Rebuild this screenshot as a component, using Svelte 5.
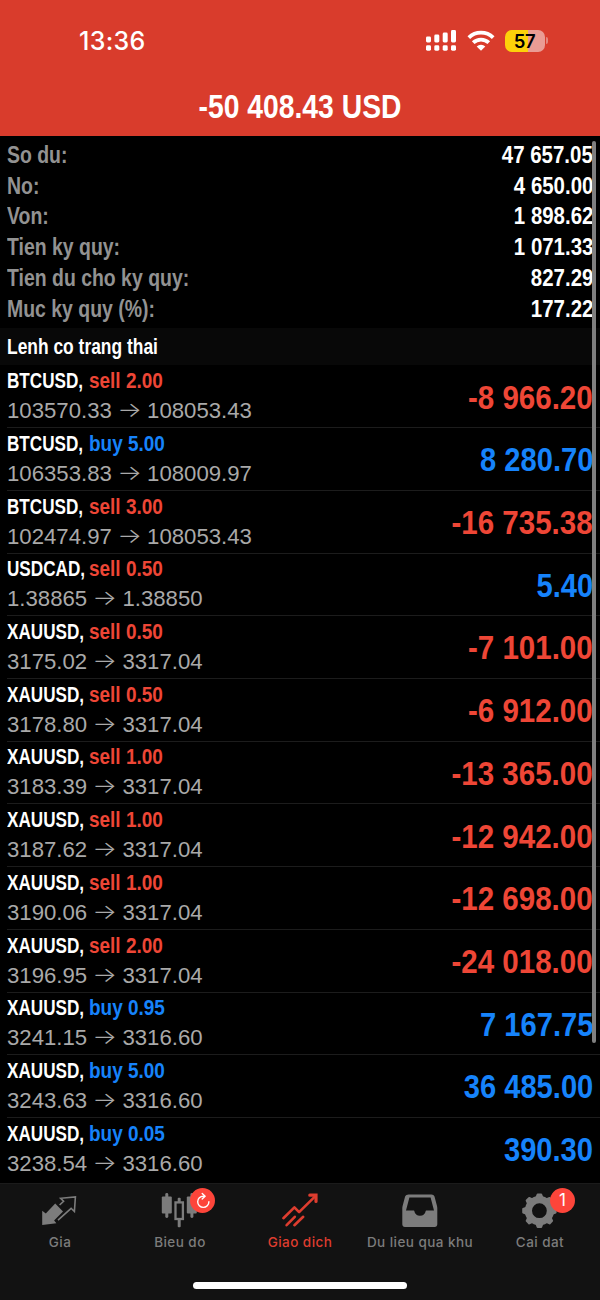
<script lang="ts">
  type Side = 'sell' | 'buy';

  const summary = [
    { label: 'So du:', value: '47 657.05' },
    { label: 'No:', value: '4 650.00' },
    { label: 'Von:', value: '1 898.62' },
    { label: 'Tien ky quy:', value: '1 071.33' },
    { label: 'Tien du cho ky quy:', value: '827.29' },
    { label: 'Muc ky quy (%):', value: '177.22' },
  ];

  const positions: { symbol: string; side: Side; lots: string; open: string; now: string; profit: string }[] = [
    { symbol: 'BTCUSD', side: 'sell', lots: '2.00', open: '103570.33', now: '108053.43', profit: '-8 966.20' },
    { symbol: 'BTCUSD', side: 'buy', lots: '5.00', open: '106353.83', now: '108009.97', profit: '8 280.70' },
    { symbol: 'BTCUSD', side: 'sell', lots: '3.00', open: '102474.97', now: '108053.43', profit: '-16 735.38' },
    { symbol: 'USDCAD', side: 'sell', lots: '0.50', open: '1.38865', now: '1.38850', profit: '5.40' },
    { symbol: 'XAUUSD', side: 'sell', lots: '0.50', open: '3175.02', now: '3317.04', profit: '-7 101.00' },
    { symbol: 'XAUUSD', side: 'sell', lots: '0.50', open: '3178.80', now: '3317.04', profit: '-6 912.00' },
    { symbol: 'XAUUSD', side: 'sell', lots: '1.00', open: '3183.39', now: '3317.04', profit: '-13 365.00' },
    { symbol: 'XAUUSD', side: 'sell', lots: '1.00', open: '3187.62', now: '3317.04', profit: '-12 942.00' },
    { symbol: 'XAUUSD', side: 'sell', lots: '1.00', open: '3190.06', now: '3317.04', profit: '-12 698.00' },
    { symbol: 'XAUUSD', side: 'sell', lots: '2.00', open: '3196.95', now: '3317.04', profit: '-24 018.00' },
    { symbol: 'XAUUSD', side: 'buy', lots: '0.95', open: '3241.15', now: '3316.60', profit: '7 167.75' },
    { symbol: 'XAUUSD', side: 'buy', lots: '5.00', open: '3243.63', now: '3316.60', profit: '36 485.00' },
    { symbol: 'XAUUSD', side: 'buy', lots: '0.05', open: '3238.54', now: '3316.60', profit: '390.30' },
  ];

  const tabs = [
    { id: 'quotes', label: 'Gia' },
    { id: 'chart', label: 'Bieu do' },
    { id: 'trade', label: 'Giao dich' },
    { id: 'history', label: 'Du lieu qua khu' },
    { id: 'settings', label: 'Cai dat' },
  ];

  const active = 'trade';
  const teeth = [0, 45, 90, 135, 180, 225, 270, 315];
</script>

<div class="screen">
  <header>
    <div class="status">
      <span class="time">13:36</span>
      <div class="indicators">
        <svg width="32" height="22" viewBox="0 0 32 22" fill="#fff">
          <rect x="0" y="6.5" width="5" height="6" rx="1.4" />
          <rect x="8.3" y="4.5" width="5" height="8" rx="1.4" />
          <rect x="16.7" y="2.5" width="5" height="10" rx="1.4" />
          <rect x="25" y="0" width="5" height="12.5" rx="1.4" />
          <rect x="0" y="15.3" width="5" height="5.4" rx="1.4" />
          <rect x="8.3" y="15.3" width="5" height="5.4" rx="1.4" />
          <rect x="16.7" y="15.3" width="5" height="5.4" rx="1.4" />
          <rect x="25" y="15.3" width="5" height="5.4" rx="1.4" />
        </svg>
        <svg class="wifi" width="28" height="22" viewBox="0 0 28 22" fill="none" stroke="#fff" stroke-width="3.8">
          <path d="M1.8 7.6a17.6 17.6 0 0 1 24.4 0" />
          <path d="M6.2 12.7a11.3 11.3 0 0 1 15.6 0" />
          <path d="M14 20.8l-4.3-4.3a6 6 0 0 1 8.6 0z" fill="#fff" stroke="none" />
        </svg>
        <div class="battery"><span>57</span></div>
        <i class="nub"></i>
      </div>
    </div>
    <h1 class="cond">-50 408.43 USD</h1>
  </header>

  <main>
    <section class="summary">
      {#each summary as row}
        <div class="sum-row">
          <span class="sum-label cond">{row.label}</span>
          <span class="sum-value cond">{row.value}</span>
        </div>
      {/each}
    </section>

    <h2><span class="cond">Lenh co trang thai</span></h2>

    <section class="positions">
      {#each positions as p}
        <div class="pos">
          <div class="pos-info">
            <div class="pos-title">
              <span class="symbol cond">{p.symbol},</span>
              <span class="order cond {p.side}">{p.side} {p.lots}</span>
            </div>
            <div class="prices">{p.open}<span class="arrow">→</span>{p.now}</div>
          </div>
          <div class="profit cond" class:loss={p.profit.startsWith('-')}>{p.profit}</div>
        </div>
      {/each}
    </section>
    <div class="scrollbar"></div>
  </main>

  <nav>
    {#each tabs as tab}
      <div class="tab" class:active={tab.id === active}>
        <div class="icon">
          {#if tab.id === 'quotes'}
            <svg width="40" height="40" viewBox="0 0 40 40">
              <path d="M15.2 11.6l7.8 7.8-8.9 9.2 2.3 2.6L2.2 33V18.8l3.6 2.6z" fill="currentColor" />
              <path d="M19.6 13l4-3.7-3-3 14.8-1.4-1 14.6-3.3-3.2L18 28.2" fill="none" stroke="currentColor" stroke-width="1.6" />
            </svg>
          {:else if tab.id === 'chart'}
            <svg width="40" height="40" viewBox="0 0 40 40" fill="currentColor">
              <rect x="1.8" y="4.5" width="10" height="17" rx="1" />
              <rect x="5.3" y="1" width="3" height="25" rx="1.4" />
              <rect x="15.5" y="10.4" width="7.4" height="16.6" fill="none" stroke="currentColor" stroke-width="2.3" />
              <rect x="17.7" y="5.8" width="3" height="5" rx="1" />
              <rect x="17.7" y="27" width="3" height="8.2" rx="1" />
              <rect x="26.8" y="4.5" width="10" height="17" rx="1" />
              <rect x="30.4" y="1" width="3" height="25" rx="1.4" />
            </svg>
            <span class="badge">
              <svg width="18" height="18" viewBox="0 0 18 18" fill="none" stroke="#fff" stroke-width="1.4" stroke-linecap="round" stroke-linejoin="round">
                <path d="M10.6 4.2H9.3a5.6 5.6 0 1 0 5.6 5.6" />
                <path d="M8.2 1.4l2.9 2.8-2.9 2.8" />
              </svg>
            </span>
          {:else if tab.id === 'trade'}
            <svg width="40" height="40" viewBox="0 0 40 40" fill="none" stroke="currentColor" stroke-width="2.6" stroke-linecap="round" stroke-linejoin="round">
              <path d="M3.4 26.2L14.4 15.4l4.7 4.7L35.6 3.8" />
              <path d="M29.8 3.2h6.2v6.2" stroke-width="3.2" stroke-linejoin="miter" />
              <path d="M6.6 33.2l8.2-8.4M14.4 33.2l8.8-8.4" />
            </svg>
          {:else if tab.id === 'history'}
            <svg width="40" height="40" viewBox="0 0 40 40">
              <path fill="currentColor" fill-rule="evenodd" d="M8.6 2.4h22.8c1.6 0 2.6.8 3.1 2.2l2.5 9.3c.2.8.3 1.6.3 2.4v15.9c0 1.6-1 2.7-2.6 2.7H4.9c-1.6 0-2.6-1.1-2.6-2.7V16.3c0-.8.1-1.6.3-2.4l2.5-9.3C5.6 3.2 7 2.4 8.6 2.4zM9.4 5.4L6 18.4h7.8c.3 0 .5.2.5.6a5.8 5.8 0 0 0 11.4 0c0-.4.2-.6.5-.6H34L30.6 5.4z" />
            </svg>
          {:else}
            <svg width="40" height="40" viewBox="0 0 40 40" fill="none" stroke="currentColor">
              <circle cx="19.4" cy="18.7" r="11" stroke-width="7.2" />
              {#each teeth as a}
                <path d="M17.6 2.5h3.6l1.3 3.4h-6.2z" stroke-width="2" stroke-linejoin="round" fill="currentColor" transform="rotate({a} 19.4 18.7)" />
              {/each}
            </svg>
            <span class="badge">1</span>
          {/if}
        </div>
        <span class="tab-label">{tab.label}</span>
      </div>
    {/each}
    <div class="home"></div>
  </nav>
</div>

<style>
  :global(body) {
    background: #000;
  }
  .screen {
    width: 600px;
    height: 1300px;
    display: flex;
    flex-direction: column;
    overflow: hidden;
    background: #000;
    color: #fff;
    font-family: "Liberation Sans", Arial, sans-serif;
  }
  /* squeezed bold face, ratio is set per element */
  .cond {
    display: inline-block;
    font-weight: 700;
    white-space: nowrap;
    transform: scaleX(var(--squeeze, .81));
    transform-origin: left center;
  }

  header {
    height: 136px;
    flex-shrink: 0;
    background: #d93c2c;
  }
  .status {
    height: 81px;
    padding: 0 52px 0 79px;
    display: flex;
    align-items: center;
    justify-content: space-between;
  }
  .time {
    font-family: Inter, sans-serif;
    font-size: 25px;
    font-weight: 500;
    letter-spacing: .3px;
    padding-top: 1px;
  }
  .indicators {
    display: flex;
    align-items: center;
  }
  .wifi { margin-left: 9px; }
  .battery {
    width: 40px;
    height: 22px;
    margin-left: 10px;
    border-radius: 7px;
    background: linear-gradient(90deg, #fdd20a 57%, #ea9c94 57%);
    color: #000;
    font: 600 18.5px/22px Inter, sans-serif;
    letter-spacing: -.4px;
    text-align: center;
  }
  .nub {
    width: 2.5px;
    height: 7px;
    margin-left: 1px;
    border-radius: 0 3px 3px 0;
    background: #e4877e;
  }
  h1 {
    --squeeze: .832;
    margin: 5px 0 0;
    width: 100%;
    font-size: 34px;
    line-height: 40px;
    text-align: center;
  }
  h1.cond { transform-origin: center; }

  main {
    position: relative;
    flex: 1;
    min-height: 0;
  }
  .summary { padding: 4px 7px; }
  .sum-row {
    display: flex;
    justify-content: space-between;
    font-size: 24px;
    line-height: 30.7px;
  }
  .sum-label { color: #929292; }
  .sum-value {
    --squeeze: .852;
    transform-origin: right center;
  }
  h2 {
    margin: 0;
    padding: 1px 7px 0;
    height: 37.2px;
    box-sizing: border-box;
    background: #080808;
    font-size: 21.5px;
    line-height: 37px;
  }
  .pos {
    height: 62.73px;
    margin-left: 7px;
    padding: 0 7px 1.4px 0;
    box-sizing: border-box;
    display: flex;
    align-items: center;
    justify-content: space-between;
    border-bottom: 1px solid #1c1c1c;
  }
  .pos:last-child { border-bottom-color: transparent; }
  .pos-title {
    display: flex;
    font-size: 22.3px;
    line-height: 29px;
  }
  .symbol {
    --squeeze: .768;
    width: 82px;
  }
  .order { --squeeze: .85; }
  .sell { color: #ee4636; }
  .buy { color: #1683fb; }
  .prices {
    font-size: 22.2px;
    line-height: 29px;
    color: #a9a9a9;
  }
  .arrow {
    display: inline-block;
    margin: 0 7px;
    font-family: Inter, sans-serif;
    font-weight: 300;
    transform: translateY(-1px) scale(1.17, .95);
  }
  .profit {
    --squeeze: .856;
    padding-top: 3px;
    font-size: 34px;
    color: #1683fb;
    transform-origin: right center;
  }
  .profit.loss {
    --squeeze: .868;
    color: #ee4636;
  }
  .scrollbar {
    position: absolute;
    top: 5px;
    right: 4px;
    width: 4px;
    height: 902px;
    border-radius: 2px;
    background: #7f7f7f;
  }

  nav {
    position: relative;
    height: 117px;
    flex-shrink: 0;
    box-sizing: border-box;
    display: grid;
    grid-template-columns: repeat(5, 1fr);
    border-top: 1px solid #1b1b1b;
    background: #121212;
  }
  .tab {
    display: flex;
    flex-direction: column;
    align-items: center;
    padding-top: 8px;
    color: #7c7c7c;
  }
  .tab.active { color: #de3d2f; }
  .icon {
    position: relative;
    width: 40px;
    height: 40px;
  }
  .icon > svg { display: block; }
  .tab-label {
    font-family: Inter, sans-serif;
    font-size: 13.5px;
    font-weight: 500;
    line-height: 20px;
    letter-spacing: .45px;
    white-space: nowrap;
  }
  .badge {
    position: absolute;
    top: -4px;
    left: 30px;
    width: 25px;
    height: 25px;
    border-radius: 50%;
    background: #fd453a;
    color: #fff;
    font: 400 17px/25px Inter, sans-serif;
    display: flex;
    align-items: center;
    justify-content: center;
  }
  .home {
    position: absolute;
    left: 193px;
    bottom: 11px;
    width: 214px;
    height: 7px;
    border-radius: 4px;
    background: #fff;
  }
</style>
